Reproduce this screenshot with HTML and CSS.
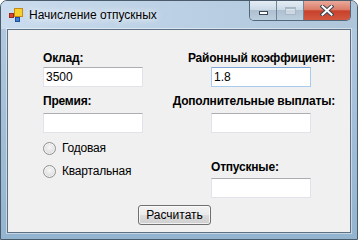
FILE: index.html
```html
<!DOCTYPE html>
<html lang="ru">
<head>
  <meta charset="UTF-8">
  <title>Начисление отпускных</title>
  <link rel="stylesheet" href="styles.css">
</head>
<body>
  <div class="window">
    <div class="titlebar">
      <svg class="app-icon" width="16" height="16" viewBox="0 0 16 16">
        <rect x="1.5" y="6.5" width="4" height="4" fill="#e0442f" stroke="#9a2a1c"/>
        <rect x="6.5" y="1.5" width="8" height="8" fill="#f6cf2a" stroke="#c88a10"/>
        <rect x="7.5" y="10.5" width="4" height="4" fill="#3f7fd6" stroke="#1f4f9a"/>
      </svg>
      <span class="title">Начисление отпускных</span>
      <div class="caption-buttons">
        <span class="cap-btn cap-min"><i></i></span>
        <span class="cap-btn cap-max"><i></i></span>
        <span class="cap-btn cap-close">
          <svg width="14" height="11" viewBox="0 0 14 11">
            <path d="M2.5 1.5 L11.5 9.5 M11.5 1.5 L2.5 9.5" stroke="#3b4652" stroke-width="4" stroke-linecap="square"/>
            <path d="M2.5 1.5 L11.5 9.5 M11.5 1.5 L2.5 9.5" stroke="#fff" stroke-width="2" stroke-linecap="square"/>
          </svg>
        </span>
      </div>
    </div>

    <div class="client">
      <div class="form">
        <div class="col col-left">
          <label class="lbl">Оклад:</label>
          <div class="textbox tb-first">3500</div>
          <label class="lbl lbl-second">Премия:</label>
          <div class="textbox tb-second"></div>
          <div class="radio radio-first"><span class="radio-dot"></span>Годовая</div>
          <div class="radio"><span class="radio-dot"></span>Квартальная</div>
        </div>
        <div class="col col-right">
          <label class="lbl">Районный коэффициент:</label>
          <div class="textbox tb-first tb-focus">1.8</div>
          <label class="lbl lbl-second">Дополнительные выплаты:</label>
          <div class="textbox tb-second"></div>
          <label class="lbl lbl-result">Отпускные:</label>
          <div class="textbox tb-result"></div>
        </div>
      </div>
      <button class="btn">Расчитать</button>
    </div>
  </div>
</body>
</html>
```

FILE: styles.css
```css
* {
  padding: 0;
  margin: 0;
  box-sizing: border-box;
}

body {
  background-color: #fff;
  font-family: "Liberation Sans", Arial, sans-serif;
  font-size: 12px;
  color: #000;
}

.window {
  display: flex;
  flex-direction: column;
  width: 358px;
  height: 240px;
  border: 1px solid #4a5b6b;
  border-radius: 7px 7px 0 0;
  background: linear-gradient(to bottom, #c3d6e9 0, #b0c8de 30px, #93b4cf 100%);
  overflow: hidden;
}

/* заголовок окна */
.titlebar {
  display: flex;
  align-items: flex-start;
  height: 28px;
  padding: 6px 0 0 7px;
  background: linear-gradient(to right, #cadcee 0, #bcd1e5 45%, #aec5da 100%);
}

.app-icon {
  flex: none;
}

.title {
  margin: 1px 0 0 5px;
  line-height: 14px;
  font-size: 12px;
  color: #000;
  text-shadow: 0 0 6px #fff, 0 0 10px rgba(255, 255, 255, .8);
}

.caption-buttons {
  display: flex;
  margin: -6px 6px 0 auto;
  height: 20px;
  border: 1px solid #54687b;
  border-top: none;
  border-radius: 0 0 5px 5px;
  overflow: hidden;
}

.cap-btn {
  display: flex;
  justify-content: center;
  height: 19px;
}

.cap-min, .cap-max {
  width: 27px;
  border-right: 1px solid #6f8396;
  background: linear-gradient(to bottom, #e3ecf4 0, #cddbe7 45%, #aebfd0 50%, #bccfdf 100%);
}

.cap-min i {
  display: block;
  width: 9px;
  height: 4px;
  margin-top: 10px;
  background-color: #fff;
  border: 1px solid #3a4858;
}

.cap-max i {
  display: block;
  width: 11px;
  height: 8px;
  margin-top: 6px;
  border: 1px solid #a8b8c7;
  border-top-width: 2px;
  background-color: rgba(255, 255, 255, .35);
}

.cap-close {
  width: 46px;
  align-items: center;
  background: linear-gradient(to bottom, #e9a99a 0, #dc7d6a 45%, #c8412c 52%, #d2573f 100%);
}

/* клиентская область */
.client {
  flex: 1;
  margin: 0 6px 6px;
  padding: 21px 15px 0 35px;
  border: 1px solid #5e7184;
  background-color: #f0f0f0;
  box-shadow: 0 0 0 1px rgba(255, 255, 255, .45);
}

.form {
  display: grid;
  grid-template-columns: 100px 1fr;
}

.col {
  display: flex;
  flex-direction: column;
}

.col-right {
  align-items: flex-end;
}

.lbl {
  display: block;
  height: 14px;
  line-height: 14px;
  font-weight: bold;
  letter-spacing: -0.2px;
  white-space: nowrap;
}

.lbl-second {
  margin-top: 7px;
}

.lbl-result {
  width: 100px;
  margin: 27px 24px 0 0;
}

.textbox {
  width: 100px;
  height: 20px;
  padding-left: 2px;
  line-height: 18px;
  background-color: #fff;
  border: 1px solid #e2e3ea;
  border-top-color: #abadb3;
}

.col-right .textbox {
  margin-right: 24px;
}

.tb-first {
  margin-top: 2px;
}

.tb-second {
  margin-top: 5px;
}

.tb-result {
  margin-top: 4px;
}

.tb-focus {
  border-color: #a9cbee;
  border-top-color: #7da7d9;
}

.radio {
  display: flex;
  align-items: center;
  height: 16px;
  margin-top: 7px;
  white-space: nowrap;
  letter-spacing: -0.2px;
}

.radio-first {
  margin-top: 7px;
}

.radio-dot {
  width: 13px;
  height: 13px;
  margin-right: 6px;
  border: 1px solid #8f9292;
  border-radius: 50%;
  background: radial-gradient(circle at 50% 40%, #f8f8f8 0, #e2e2e2 55%, #cfcfcf 100%);
  box-shadow: inset 0 0 0 1px rgba(255, 255, 255, .6);
}

.btn {
  display: block;
  width: 73px;
  height: 20px;
  margin: 7px 0 0 95px;
  font-family: "Liberation Sans", Arial, sans-serif;
  font-size: 12px;
  color: #000;
  border: 1px solid #707070;
  border-radius: 3px;
  background: linear-gradient(to bottom, #f2f2f2 0, #ebebeb 50%, #dddddd 50%, #cfcfcf 100%);
  box-shadow: inset 0 0 0 1px rgba(255, 255, 255, .7);
}
```
